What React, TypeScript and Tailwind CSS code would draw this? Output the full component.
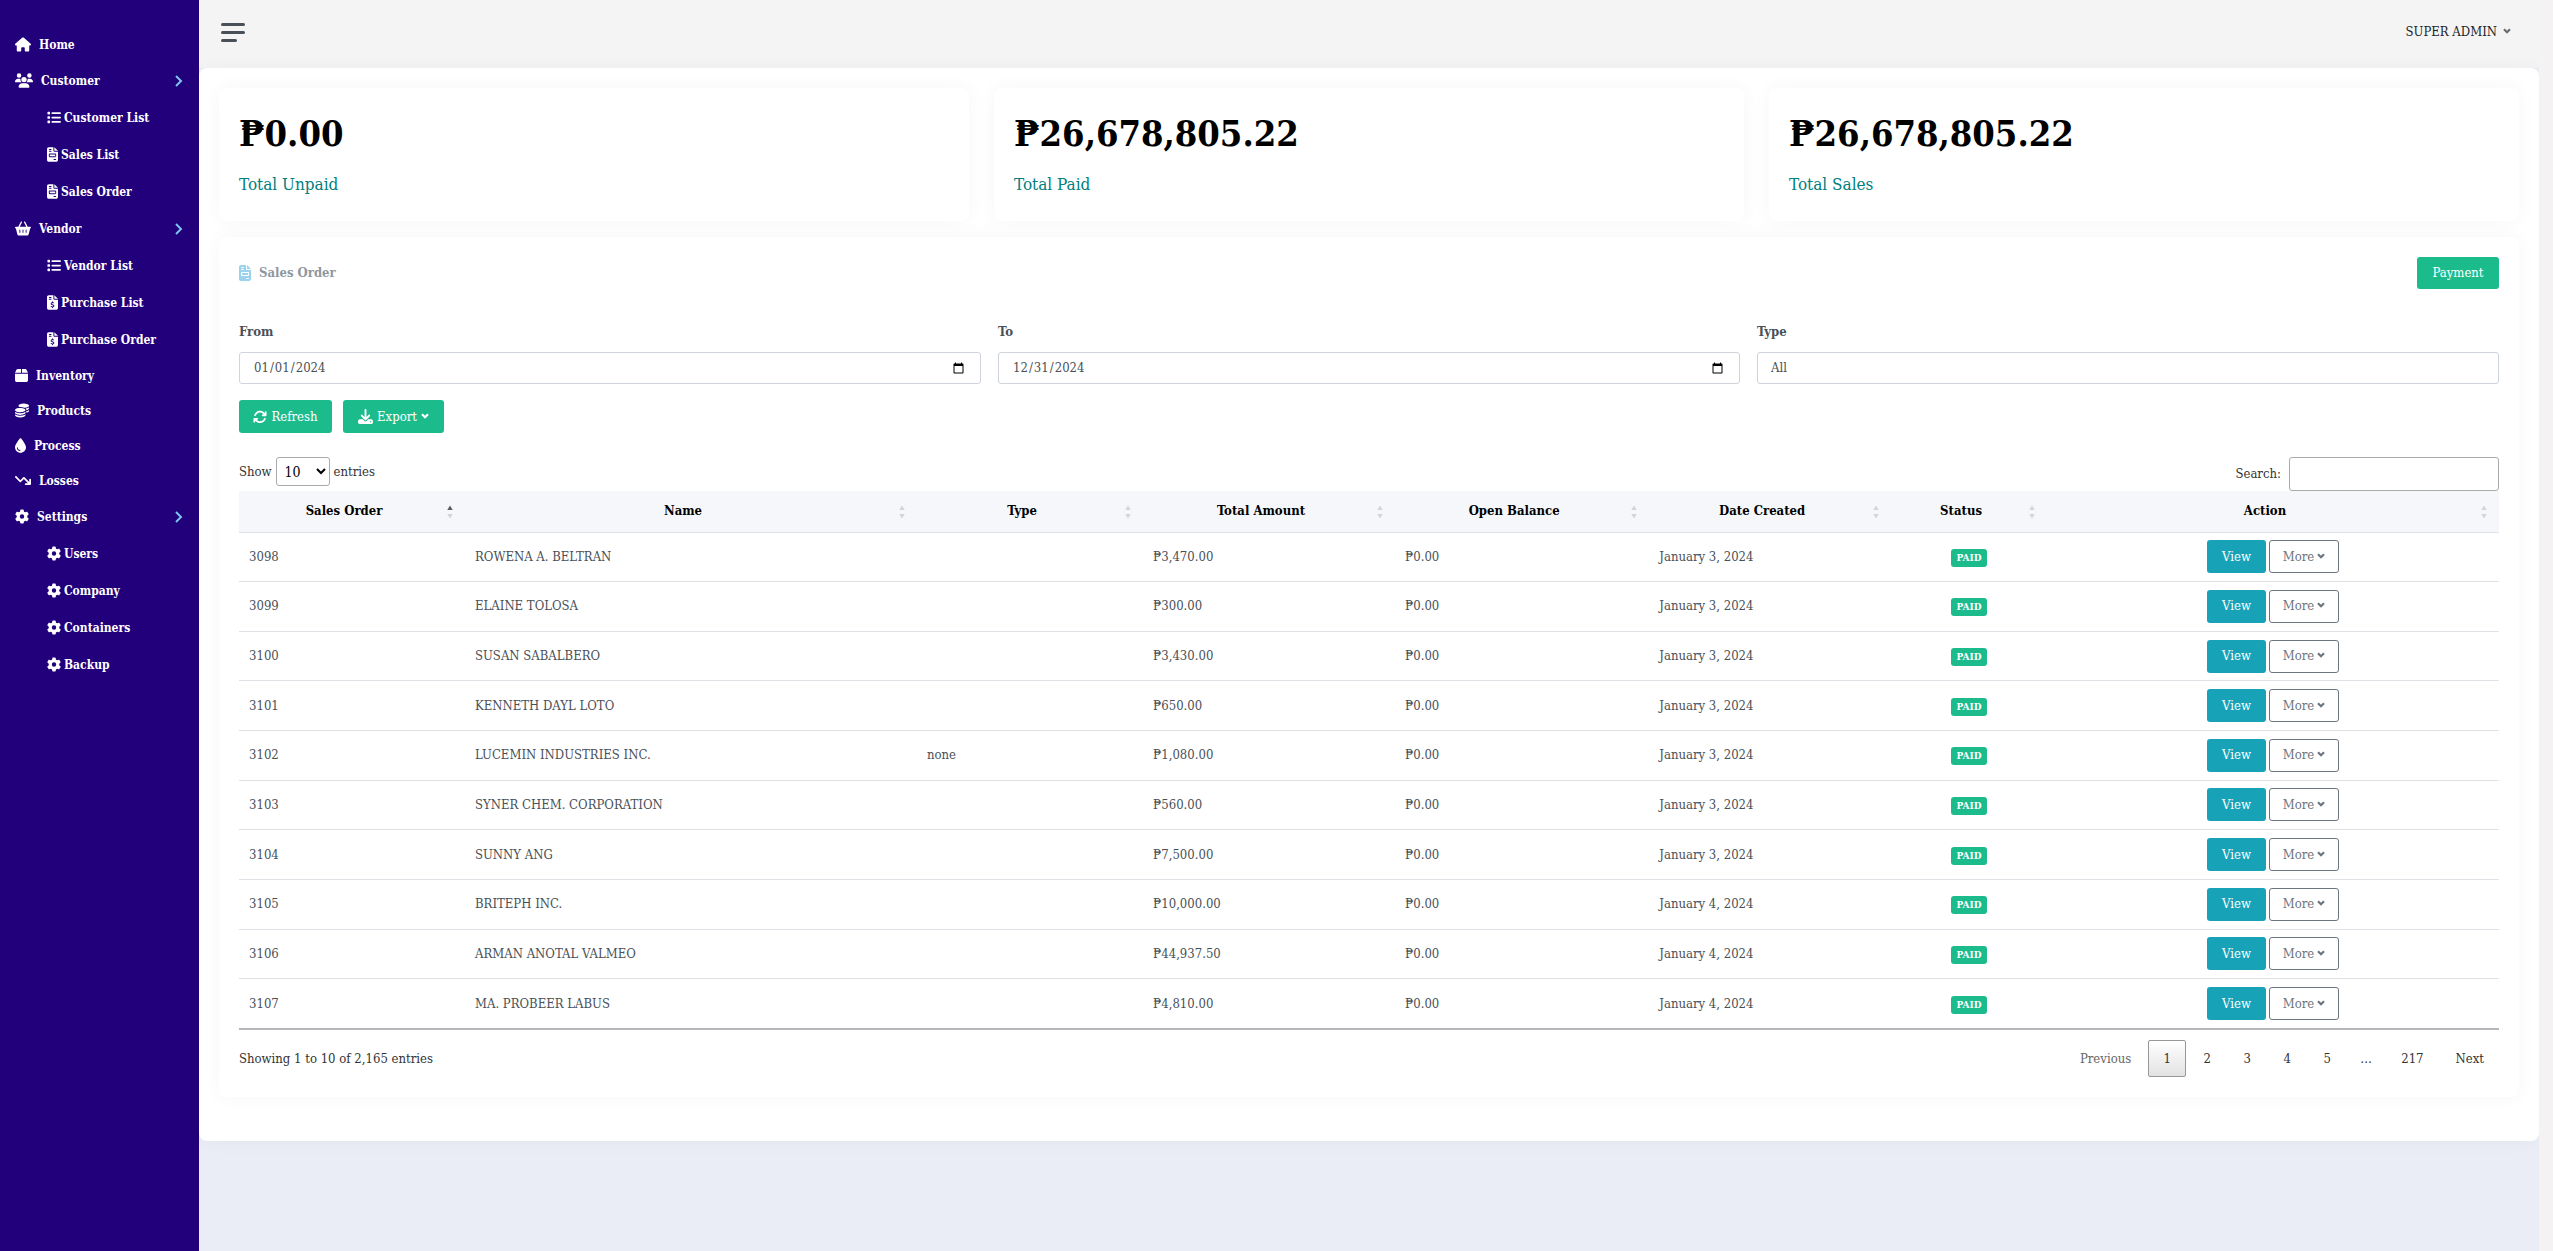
import React from "react";
import {
  FaHouse,
  FaUsers,
  FaList,
  FaFileInvoice,
  FaFileInvoiceDollar,
  FaBasketShopping,
  FaBox,
  FaCoins,
  FaDroplet,
  FaArrowTrendDown,
  FaGear,
  FaArrowsRotate,
  FaDownload,
} from "react-icons/fa6";
import type { IconType } from "react-icons";

type NavLeaf = { label: string; icon: IconType; size: string };
type NavItem = NavLeaf & { children?: NavLeaf[] };

const nav: NavItem[] = [
  { label: "Home", icon: FaHouse, size: "w-4" },
  {
    label: "Customer",
    icon: FaUsers,
    size: "w-[18px]",
    children: [
      { label: "Customer List", icon: FaList, size: "w-[14px]" },
      { label: "Sales List", icon: FaFileInvoice, size: "w-[11px]" },
      { label: "Sales Order", icon: FaFileInvoice, size: "w-[11px]" },
    ],
  },
  {
    label: "Vendor",
    icon: FaBasketShopping,
    size: "w-4",
    children: [
      { label: "Vendor List", icon: FaList, size: "w-[14px]" },
      { label: "Purchase List", icon: FaFileInvoiceDollar, size: "w-[11px]" },
      { label: "Purchase Order", icon: FaFileInvoiceDollar, size: "w-[11px]" },
    ],
  },
  { label: "Inventory", icon: FaBox, size: "w-[13px]" },
  { label: "Products", icon: FaCoins, size: "w-[14px]" },
  { label: "Process", icon: FaDroplet, size: "w-[11px]" },
  { label: "Losses", icon: FaArrowTrendDown, size: "w-4" },
  {
    label: "Settings",
    icon: FaGear,
    size: "w-[14px]",
    children: [
      { label: "Users", icon: FaGear, size: "w-[14px]" },
      { label: "Company", icon: FaGear, size: "w-[14px]" },
      { label: "Containers", icon: FaGear, size: "w-[14px]" },
      { label: "Backup", icon: FaGear, size: "w-[14px]" },
    ],
  },
];

const stats = [
  { value: "₱0.00", label: "Total Unpaid" },
  { value: "₱26,678,805.22", label: "Total Paid" },
  { value: "₱26,678,805.22", label: "Total Sales" },
];

const columns = [
  { label: "Sales Order", width: "w-[10%]" },
  { label: "Name", width: "w-[20%]" },
  { label: "Type", width: "w-[10%]" },
  { label: "Total Amount", width: "w-[11.15%]" },
  { label: "Open Balance", width: "w-[11.25%]" },
  { label: "Date Created", width: "w-[10.7%]" },
  { label: "Status", width: "w-[6.9%]" },
  { label: "Action", width: "w-[20%]" },
];

const rows = [
  ["3098", "ROWENA A. BELTRAN", "", "₱3,470.00", "₱0.00", "January 3, 2024"],
  ["3099", "ELAINE TOLOSA", "", "₱300.00", "₱0.00", "January 3, 2024"],
  ["3100", "SUSAN SABALBERO", "", "₱3,430.00", "₱0.00", "January 3, 2024"],
  ["3101", "KENNETH DAYL LOTO", "", "₱650.00", "₱0.00", "January 3, 2024"],
  ["3102", "LUCEMIN INDUSTRIES INC.", "none", "₱1,080.00", "₱0.00", "January 3, 2024"],
  ["3103", "SYNER CHEM. CORPORATION", "", "₱560.00", "₱0.00", "January 3, 2024"],
  ["3104", "SUNNY ANG", "", "₱7,500.00", "₱0.00", "January 3, 2024"],
  ["3105", "BRITEPH INC.", "", "₱10,000.00", "₱0.00", "January 4, 2024"],
  ["3106", "ARMAN ANOTAL VALMEO", "", "₱44,937.50", "₱0.00", "January 4, 2024"],
  ["3107", "MA. PROBEER LABUS", "", "₱4,810.00", "₱0.00", "January 4, 2024"],
];

function Caret({ className = "" }: { className?: string }) {
  return (
    <svg viewBox="0 0 8 8" className={`inline-block h-[8px] w-[8px] ${className}`} aria-hidden="true">
      <path d="M1 1.2 4 4.2 7 1.2" fill="none" stroke="currentColor" strokeWidth="2.2" />
    </svg>
  );
}

function SortMarks({ ascending }: { ascending: boolean }) {
  return (
    <svg viewBox="0 0 6 14" className="absolute top-[14px] right-3 h-[14px] w-[6px]" aria-hidden="true">
      <path d="M0.3 5 3 0.5 5.7 5Z" fill={ascending ? "#5b5c60" : "#d3d4d8"} />
      <path d="M0.3 9 3 13.5 5.7 9Z" fill="#d3d4d8" />
    </svg>
  );
}

function Sidebar() {
  return (
    <nav className="w-[199px] shrink-0 bg-[#23007b] pt-[27px] text-[12px] font-bold text-white">
      <ul>
        {nav.map(({ label, icon: Icon, size, children }) => (
          <li key={label}>
            <a href="#" className={`flex items-center gap-2 pr-4 pl-[15px] ${children ? "h-[37px]" : "h-[35px]"}`}>
              <Icon className={`h-[15px] ${size}`} />
              <span>{label}</span>
              {children && (
                <svg viewBox="0 0 8 12" className="ml-auto h-[12px] w-[8px]" aria-hidden="true">
                  <path d="M1 1 6 6 1 11" fill="none" stroke="#7cc4ee" strokeWidth="2" />
                </svg>
              )}
            </a>
            {children && (
              <ul>
                {children.map(({ label: sub, icon: SubIcon, size: subSize }) => (
                  <li key={sub}>
                    <a href="#" className="flex h-[37px] items-center gap-[3px] pl-[47px]">
                      <SubIcon className={`h-[15px] ${subSize}`} />
                      <span>{sub}</span>
                    </a>
                  </li>
                ))}
              </ul>
            )}
          </li>
        ))}
      </ul>
    </nav>
  );
}

const card = "rounded-lg bg-white shadow-[0_0_20px_rgba(0,0,0,0.04)]";
const field = "block h-8 w-full rounded-[3px] border border-[#ced4da] bg-white px-[13px] text-[13px] text-[#495057]";
const green = "rounded-[3px] bg-[#1cbb8c] text-white";

export default function App() {
  const pages = ["1", "2", "3", "4", "5", "…", "217"];
  return (
    <div className="flex min-h-screen bg-[#eaedf6] font-['DejaVu_Serif_Condensed','DejaVu_Serif',serif] text-[13px] leading-5 text-[#495057]">
      <Sidebar />
      <div className="min-w-0 flex-1">
        <header className="flex h-[68px] items-center justify-between bg-[#f4f4f4] pr-7 pb-1 pl-[22px]">
          <button type="button" aria-label="Toggle menu" className="flex flex-col gap-[5px]">
            <span className="h-[3px] w-6 rounded-sm bg-[#495057]" />
            <span className="h-[3px] w-6 rounded-sm bg-[#495057]" />
            <span className="h-[3px] w-4 rounded-sm bg-[#495057]" />
          </button>
          <button type="button" className="flex items-center gap-1.5 text-[#212529]">
            SUPER ADMIN <Caret className="text-[#6c6c6c]" />
          </button>
        </header>

        <main className="rounded-lg bg-white px-5 pt-5 pb-11 shadow-[0_0_20px_rgba(0,0,0,0.04)]">
          <section className="grid grid-cols-3 gap-[25px]">
            {stats.map((s) => (
              <div key={s.label} className={`${card} h-[133px] px-5 pt-6`}>
                <p className="text-[36px] leading-[42px] font-bold text-black">{s.value}</p>
                <p className="mt-[18px] text-[17px] leading-6 text-[#008080]">{s.label}</p>
              </div>
            ))}
          </section>

          <section className={`${card} mt-4 p-5`}>
            <div className="flex items-center justify-between">
              <h1 className="flex items-center gap-2 text-[13px] font-bold text-[#8f979e]">
                <FaFileInvoice className="h-4 w-3 text-[#9bd3ee]" />
                Sales Order
              </h1>
              <button type="button" className={`${green} h-8 w-[82px]`}>
                Payment
              </button>
            </div>

            <div className="mt-[33px] grid grid-cols-3 gap-x-[17px]">
              <label>
                <span className="mb-2.5 block font-bold">From</span>
                <input type="date" defaultValue="2024-01-01" className={field} />
              </label>
              <label>
                <span className="mb-2.5 block font-bold">To</span>
                <input type="date" defaultValue="2024-12-31" className={field} />
              </label>
              <label>
                <span className="mb-2.5 block font-bold">Type</span>
                <select className={`${field} appearance-none`}>
                  <option>All</option>
                </select>
              </label>
            </div>

            <div className="mt-4 flex gap-[11px]">
              <button type="button" className={`${green} flex h-[33px] w-[93px] items-center justify-center gap-1`}>
                <FaArrowsRotate className="h-[14px] w-[14px]" /> Refresh
              </button>
              <button type="button" className={`${green} flex h-[33px] w-[101px] items-center justify-center gap-1`}>
                <FaDownload className="h-[15px] w-[15px]" /> Export <Caret />
              </button>
            </div>

            <div className="mt-6 flex h-[34px] items-start justify-between text-[#333]">
              <label className="flex items-center gap-1">
                Show
                <select
                  defaultValue="10"
                  className="h-[29px] w-[54px] rounded-[3px] border border-[#aaa] bg-white px-1 text-[14px] text-black"
                >
                  <option>10</option>
                  <option>25</option>
                  <option>50</option>
                  <option>100</option>
                </select>
                entries
              </label>
              <label className="flex items-center gap-2">
                Search:
                <input type="search" className="h-[34px] w-[210px] rounded-[3px] border border-[#aaa] bg-white px-2" />
              </label>
            </div>

            <table className="h-[539px] w-full table-fixed border-collapse border-b-2 border-[#b4b6b9]">
              <thead>
                <tr className="h-[41px] border-b border-[#dee2e6] bg-[#f5f7fb] text-black">
                  {columns.map((c, i) => (
                    <th key={c.label} className={`${c.width} relative pr-[26px] pl-2.5 font-bold`}>
                      {c.label}
                      <SortMarks ascending={i === 0} />
                    </th>
                  ))}
                </tr>
              </thead>
              <tbody>
                {rows.map((r) => (
                  <tr key={r[0]} className="border-b border-[#dee2e6]">
                    {r.map((cell, i) => (
                      <td key={i} className="px-2.5">
                        {cell}
                      </td>
                    ))}
                    <td className="text-center">
                      <span className="inline-block rounded-[3px] bg-[#1cbb8c] px-[5px] text-[10px] leading-[18px] font-bold text-white">
                        PAID
                      </span>
                    </td>
                    <td>
                      <div className="flex justify-center gap-[3px]">
                        <button type="button" className="h-[33px] w-[59px] rounded-[3px] bg-[#17a2b8] text-white">
                          View
                        </button>
                        <button
                          type="button"
                          className="flex h-[33px] w-[70px] items-center justify-center gap-[3px] rounded-[3px] border border-[#6c757d] text-[#6c757d]"
                        >
                          More <Caret />
                        </button>
                      </div>
                    </td>
                  </tr>
                ))}
              </tbody>
            </table>

            <div className="mt-2.5 flex items-center justify-between text-[#333]">
              <p>Showing 1 to 10 of 2,165 entries</p>
              <div className="flex items-center gap-0.5">
                <button type="button" className="h-[37px] px-[15px] text-[#666]">
                  Previous
                </button>
                {pages.map((p) =>
                  p === "…" ? (
                    <span key={p} className="w-9 text-center">
                      {p}
                    </span>
                  ) : (
                    <button
                      key={p}
                      type="button"
                      className={
                        p === "1"
                          ? "h-[37px] min-w-[38px] rounded-[2px] border border-[#979797] bg-linear-to-b from-white to-[#e2e2e2]"
                          : "h-[37px] min-w-[38px] px-[15px]"
                      }
                    >
                      {p}
                    </button>
                  ),
                )}
                <button type="button" className="h-[37px] px-[15px]">
                  Next
                </button>
              </div>
            </div>
          </section>
        </main>
      </div>
      <div className="w-[14px] shrink-0 bg-[#f4f2f3]" />
    </div>
  );
}
